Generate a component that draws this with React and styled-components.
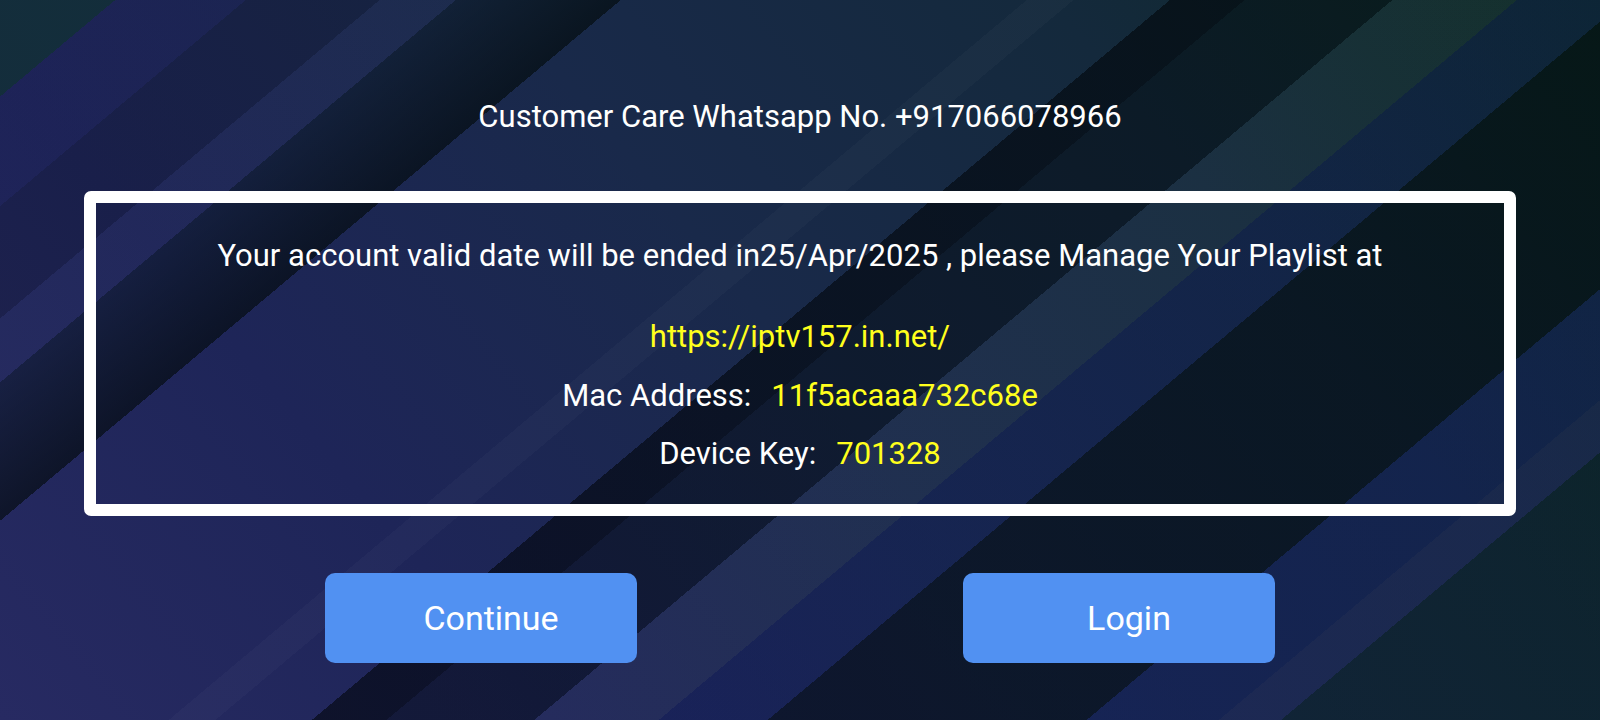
import styled, { createGlobalStyle } from 'styled-components';

const GlobalStyle = createGlobalStyle`
  html, body {
    margin: 0;
    padding: 0;
    height: 720px;
    overflow: hidden;
  }
  body {
    font-family: Roboto, "Noto Sans", sans-serif;
  }
`;

const info = {
  whatsapp: '+917066078966',
  validTill: '25/Apr/2025',
  url: 'https://iptv157.in.net/',
  mac: '11f5acaaa732c68e',
  deviceKey: '701328',
};

const App = () => {
  return (
    <>
      <GlobalStyle />
      <Page>
        <CareLine>Customer Care Whatsapp No. {info.whatsapp}</CareLine>
        <InfoBox>
          <Line>
            Your account valid date will be ended in{info.validTill} , please Manage Your Playlist at
          </Line>
          <Line $gap={47}>
            <Value>{info.url}</Value>
          </Line>
          <Line $gap={25}>
            Mac Address:<Value $space>{info.mac}</Value>
          </Line>
          <Line $gap={24}>
            Device Key:<Value $space>{info.deviceKey}</Value>
          </Line>
        </InfoBox>
        <ButtonRow>
          <ActionButton>Continue</ActionButton>
          <ActionButton>Login</ActionButton>
        </ButtonRow>
      </Page>
    </>
  );
};

// diagonal bands of the wallpaper, stops measured along a 140deg line
const bands = `linear-gradient(140deg,
  rgba(16, 48, 50, 0.75) 0 74px,
  rgba(28, 30, 86, 0.3) 74px 158px,
  rgba(0, 0, 0, 0.16) 158px 244px,
  rgba(255, 255, 255, 0.015) 244px 293px,
  rgba(0, 16, 10, 0.32) 293px,
  rgba(0, 8, 6, 0.6) 399px,
  transparent 399px 660px,
  rgba(255, 255, 255, 0.025) 660px 690px,
  transparent 690px 752px,
  rgba(0, 4, 8, 0.58) 752px 800px,
  rgba(0, 6, 8, 0.4) 800px 895px,
  rgba(255, 255, 255, 0.03) 895px 975px,
  rgba(16, 26, 96, 0.3) 975px 1045px,
  rgba(0, 6, 10, 0.5) 1045px 1250px,
  rgba(18, 28, 100, 0.4) 1250px 1335px,
  rgba(36, 40, 104, 0.38) 1335px 1375px,
  rgba(4, 26, 26, 0.35) 1375px)`;

const Page = styled.main`
  width: 1600px;
  height: 720px;
  box-sizing: border-box;
  padding-top: 100px;
  display: flex;
  flex-direction: column;
  align-items: center;
  color: #fff;
  background:
    ${bands},
    linear-gradient(50deg,
      #272a62 0%,
      #1e2558 25%,
      #19294a 50%,
      #14293c 75%,
      #0c2a24 100%);
`;

const CareLine = styled.div`
  font-size: 31px;
  line-height: 34px;
  height: 34px;
`;

const InfoBox = styled.section`
  margin-top: 57px;
  width: 1432px;
  box-sizing: border-box;
  border: 12px solid #fff;
  border-radius: 7px;
  padding: 36px 0 33px;
  display: flex;
  flex-direction: column;
  align-items: center;
`;

const Line = styled.p`
  margin: ${(p) => (p.$gap ? `${p.$gap}px` : '0')} 0 0;
  font-size: 31px;
  line-height: 34px;
  text-align: center;
`;

const Value = styled.span`
  color: #ffff1c;
  margin-left: ${(p) => (p.$space ? '20px' : '0')};
`;

const ButtonRow = styled.div`
  margin-top: 57px;
  display: flex;
  gap: 326px;
`;

const ActionButton = styled.button`
  width: 312px;
  height: 90px;
  padding: 0 0 0 20px;
  border: none;
  border-radius: 10px;
  background: #5191f2;
  color: #fff;
  font-family: Roboto, "Noto Sans", sans-serif;
  font-size: 34px;
  cursor: pointer;
`;

export default App;
